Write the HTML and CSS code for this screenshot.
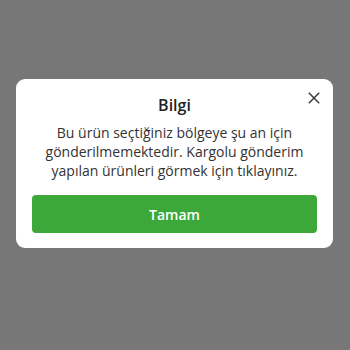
FILE: index.html
```html
<!DOCTYPE html>
<html lang="tr">
<head>
  <meta charset="UTF-8">
  <meta name="viewport" content="width=device-width, initial-scale=1.0">
  <title>Bilgi</title>
  <link rel="stylesheet" href="styles.css">
</head>
<body>
  <div class="overlay">
    <div class="modal">
      <button class="close" aria-label="Kapat">
        <svg width="12" height="12" viewBox="0 0 12 12"><path d="M0.8 0.8 L11.2 11.2 M11.2 0.8 L0.8 11.2" stroke="#3a3a3a" stroke-width="1.5" fill="none"/></svg>
      </button>
      <h2 class="modal-title">Bilgi</h2>
      <p class="modal-text">Bu ürün seçtiğiniz bölgeye şu an için gönderilmemektedir. Kargolu gönderim yapılan ürünleri görmek için tıklayınız.</p>
      <button class="btn-ok">Tamam</button>
    </div>
  </div>
</body>
</html>
```

FILE: styles.css
```css
* { box-sizing: border-box; }
html, body { margin: 0; height: 100%; }
body { font-family: 'Open Sans', sans-serif; background: #777777; color: #333; }
.overlay { height: 100%; display: flex; align-items: center; justify-content: center; padding: 0 17px 23px 16px; }
.modal { position: relative; width: 100%; background: white; border-radius: 9px; padding: 14px 16px 15px; text-align: center; }
.close { position: absolute; top: 13px; right: 13px; width: 12px; height: 12px; padding: 0; border: 0; background: none; display: flex; cursor: pointer; }
.modal-title { margin: 0 0 6px; font-size: 16px; font-weight: 600; line-height: 24px; color: #222; }
.modal-text { margin: 0 0 15px; font-size: 14px; line-height: 19px; color: #333; }
.btn-ok { display: block; width: 100%; height: 38px; border: 0; border-radius: 4px; background: #3ca83a; color: white; font-family: inherit; font-size: 14px; font-weight: 600; cursor: pointer; }
```
